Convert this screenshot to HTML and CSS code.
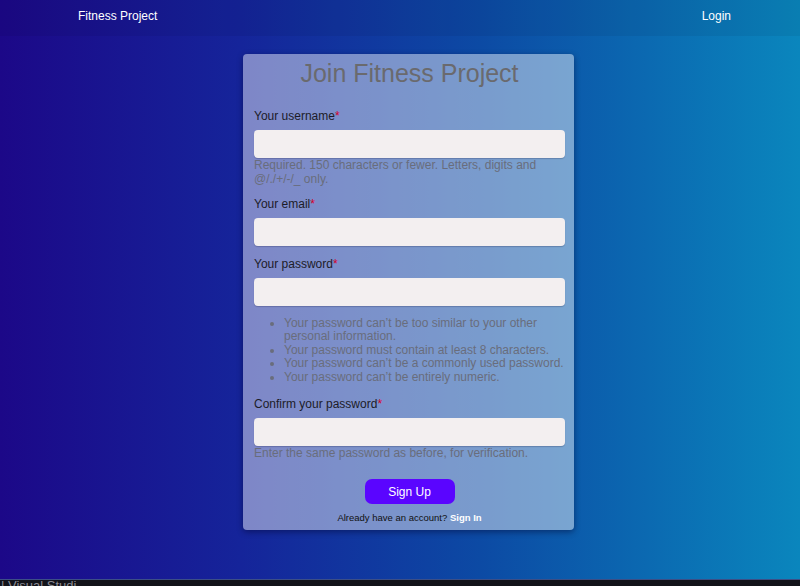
FILE: index.html
```html
<!DOCTYPE html>
<html lang="en">
<head>
<meta charset="utf-8">
<title>Join Fitness Project</title>
<link rel="stylesheet" href="styles.css">
</head>
<body>
<nav class="navbar">
  <a class="brand" href="#">Fitness Project</a>
  <a class="nav-link" href="#">Login</a>
</nav>
<main class="page">
  <form class="card">
    <h1 class="title">Join Fitness Project</h1>
    <div class="field">
      <label class="label">Your username<span class="req">*</span></label>
      <input class="input" type="text">
      <div class="help">Required. 150 characters or fewer. Letters, digits and @/./+/-/_ only.</div>
    </div>
    <div class="field">
      <label class="label">Your email<span class="req">*</span></label>
      <input class="input" type="email">
    </div>
    <div class="field">
      <label class="label">Your password<span class="req">*</span></label>
      <input class="input" type="password">
      <ul class="rules">
        <li>Your password can’t be too similar to your other personal information.</li>
        <li>Your password must contain at least 8 characters.</li>
        <li>Your password can’t be a commonly used password.</li>
        <li>Your password can’t be entirely numeric.</li>
      </ul>
    </div>
    <div class="field">
      <label class="label">Confirm your password<span class="req">*</span></label>
      <input class="input" type="password">
      <div class="help">Enter the same password as before, for verification.</div>
    </div>
    <div class="actions">
      <button class="btn" type="button">Sign Up</button>
      <p class="signin">Already have an account? <a href="#">Sign In</a></p>
    </div>
  </form>
</main>
<div class="taskbar"><span>| Visual Studi...</span></div>
</body>
</html>
```
FILE: styles.css
```css
html, body {
  margin: 0;
  height: 100%;
}
body {
  font-family: "Liberation Sans", Arial, sans-serif;
  background: linear-gradient(to right, #1c0888 0%, #15249a 30%, #0c4aa4 60%, #0a86bd 100%);
  overflow: hidden;
}
.navbar {
  height: 36px;
  box-sizing: border-box;
  padding: 9px 69px 0 78px;
  display: flex;
  justify-content: space-between;
  align-items: flex-start;
  background: rgba(0, 0, 20, 0.06);
}
.navbar a {
  color: #fff;
  text-decoration: none;
  font-size: 12px;
  line-height: 14px;
}
.page {
  display: flex;
  justify-content: center;
  padding: 18px 0 0 17px;
}
.card {
  width: 331px;
  box-sizing: border-box;
  padding: 4px 9px 6px 11px;
  background: rgba(255, 255, 255, 0.45);
  border-radius: 4px;
  box-shadow: 0 2px 6px rgba(0, 0, 40, 0.45);
}
.title {
  margin: 0 0 21px;
  text-align: center;
  font-weight: normal;
  font-size: 25px;
  line-height: 30px;
  color: #6a6a6e;
}
.field {
  margin-bottom: 11px;
}
.label {
  display: block;
  font-size: 12px;
  line-height: 14px;
  color: #1c1c28;
  margin-bottom: 7px;
}
.req {
  color: #d4002a;
}
.input {
  display: block;
  width: 311px;
  height: 28px;
  box-sizing: border-box;
  border: none;
  border-radius: 4px;
  background: #f3eff0;
  box-shadow: 0 1px 1px rgba(0, 0, 40, 0.2);
  margin: 0;
}
.help {
  font-size: 12px;
  line-height: 14px;
  color: #696d7c;
}
.rules {
  margin: 11px 0 13px;
  padding-left: 30px;
  font-size: 12px;
  line-height: 13.4px;
  color: #696d7c;
}
.actions {
  display: flex;
  flex-direction: column;
  align-items: center;
  padding-top: 8px;
}
.btn {
  width: 90px;
  height: 25px;
  border: none;
  border-radius: 7px;
  background: #5a05ff;
  color: #fff;
  font-family: "Liberation Sans", Arial, sans-serif;
  font-size: 12px;
  padding: 0;
}
.signin {
  margin: 8px 0 0;
  font-size: 9.5px;
  line-height: 12px;
  color: #111;
}
.signin a {
  color: #fff;
  font-weight: bold;
  text-decoration: none;
}
.taskbar {
  position: fixed;
  left: 0;
  right: 0;
  bottom: 0;
  height: 6px;
  overflow: hidden;
  background: #121319;
  border-top: 1px solid #3c4e86;
}
.taskbar span {
  display: block;
  padding-left: 1px;
  margin-top: -1px;
  font-size: 13px;
  line-height: 14px;
  color: #8a8a92;
  white-space: nowrap;
}
```
